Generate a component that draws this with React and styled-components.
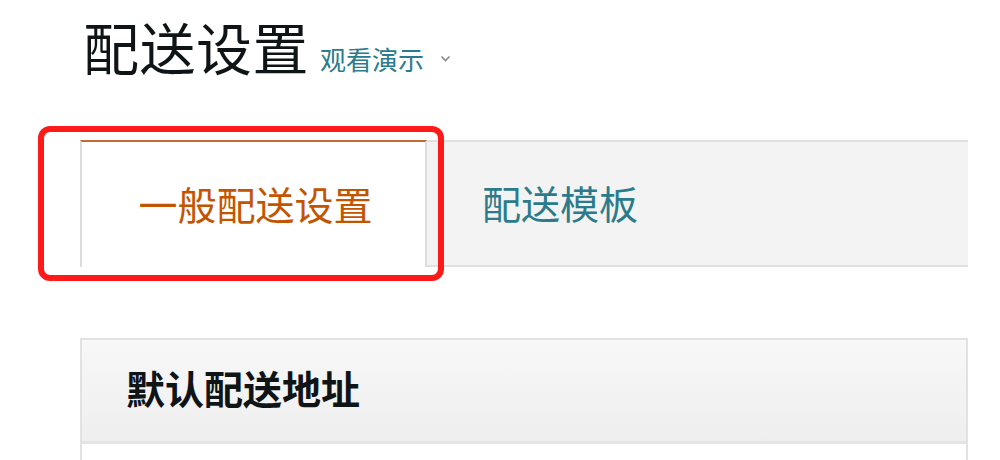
import React from 'react';
import styled, {createGlobalStyle} from 'styled-components';

const GlobalStyle = createGlobalStyle`
  body {
    margin: 0;
    background: #fff;
    font-family: "Noto Sans CJK SC", "Noto Sans", sans-serif;
  }
`;

const Page = styled.div`
  width: 888px;
  height: 460px;
  overflow: hidden;
  padding: 10px 0 0 80px;
  box-sizing: content-box;
`;

const TitleRow = styled.div`
  display: flex;
  align-items: baseline;
  height: 108px;
`;

const Title = styled.h1`
  margin: 0 0 0 3px;
  font-size: 56px;
  font-weight: 400;
  line-height: 72px;
  color: #0f1416;
  letter-spacing: 0.5px;
`;

const DemoLink = styled.a`
  display: flex;
  align-items: center;
  margin-left: 11px;
  font-size: 26px;
  color: #2b7b8c;
  cursor: pointer;
`;

const Chevron = styled.svg`
  margin-left: 16px;
  width: 11px;
  height: 8px;
`;

const Tabs = styled.div`
  position: relative;
  display: flex;
  height: 123px;
  margin-top: 22px;
  background: #f3f3f3;
  border-top: 2px solid #e0e0e0;
  border-bottom: 2px solid #e0e0e0;
`;

const Tab = styled.div`
  display: flex;
  align-items: center;
  justify-content: ${p => (p.$active ? 'center' : 'flex-start')};
  width: ${p => (p.$active ? '347px' : 'auto')};
  box-sizing: border-box;
  margin: ${p => (p.$active ? '-2px 0 -2px 0' : '0')};
  padding: ${p => (p.$active ? '0 0 4px 4px' : '0 0 4px 55px')};
  font-size: 39px;
  color: ${p => (p.$active ? '#c45500' : '#2b7b8c')};
  background: ${p => (p.$active ? '#fff' : 'transparent')};
  border-top: ${p => (p.$active ? '2px solid #c26a33' : 'none')};
  border-left: ${p => (p.$active ? '2px solid #ddd' : 'none')};
  border-right: ${p => (p.$active ? '2px solid #ddd' : 'none')};
  cursor: pointer;
`;

const Highlight = styled.div`
  position: absolute;
  left: -42px;
  top: -16px;
  width: 406px;
  height: 155px;
  box-sizing: border-box;
  border: 6px solid #ff1a1a;
  border-radius: 12px;
  pointer-events: none;
`;

const Panel = styled.div`
  margin-top: 71px;
  border: 2px solid #e2e2e2;
  border-bottom: none;
`;

const PanelHeader = styled.div`
  display: flex;
  align-items: center;
  height: 104px;
  padding: 0 0 8px 44px;
  box-sizing: border-box;
  background: linear-gradient(#f8f8f8, #eeeeee);
  border-bottom: 3px solid #e4e4e4;
  font-size: 39px;
  font-weight: 700;
  color: #0f1416;
`;

const PanelBody = styled.div`
  height: 40px;
  background: #fff;
`;

export default function App() {
  return (
    <>
      <GlobalStyle />
      <Page>
        <TitleRow>
          <Title>配送设置</Title>
          <DemoLink>
            观看演示
            <Chevron viewBox="0 0 11 8">
              <path d="M1.5 1.5 L5.5 5.5 L9.5 1.5" fill="none" stroke="#888" strokeWidth="1.6" />
            </Chevron>
          </DemoLink>
        </TitleRow>
        <Tabs>
          <Tab $active>一般配送设置</Tab>
          <Tab>配送模板</Tab>
          <Highlight />
        </Tabs>
        <Panel>
          <PanelHeader>默认配送地址</PanelHeader>
          <PanelBody />
        </Panel>
      </Page>
    </>
  );
}
